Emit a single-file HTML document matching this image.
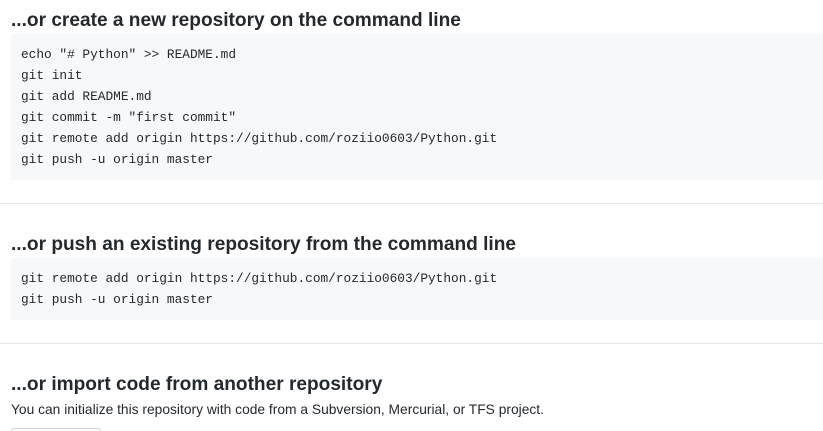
<!DOCTYPE html>
<html style="overflow:hidden;height:431px"><head><style>
body{margin:0;background:#fff;width:823px;height:431px;overflow:hidden;position:relative;font-family:"Liberation Sans",sans-serif;color:#24292e}
h3{position:absolute;left:11px;margin:0;font-size:19.1px;font-weight:600;line-height:24px;white-space:nowrap}
.box{position:absolute;left:11px;right:0;background:#f6f8fa}
pre{margin:0;padding:0;position:absolute;left:21px;font-family:"Liberation Mono",monospace;font-size:12.8px;line-height:21px;color:#24292e}
.hr{position:absolute;left:0;right:0;height:1px;background:#e1e4e8}
</style></head><body>
<h3 style="top:9px">...or create a new repository on the command line</h3>
<div class="box" style="top:34px;height:146px"></div>
<pre style="top:44px">echo "# Python" &gt;&gt; README.md
git init
git add README.md
git commit -m "first commit"
git remote add origin https://github.com/roziio0603/Python.git
git push -u origin master</pre>
<div class="hr" style="top:203px"></div>
<h3 style="top:233px">...or push an existing repository from the command line</h3>
<div class="box" style="top:258px;height:62px"></div>
<pre style="top:268px">git remote add origin https://github.com/roziio0603/Python.git
git push -u origin master</pre>
<div class="hr" style="top:343px"></div>
<h3 style="top:373px">...or import code from another repository</h3>
<div style="position:absolute;left:11px;top:401px;font-size:13.8px;line-height:18px">You can initialize this repository with code from a Subversion, Mercurial, or TFS project.</div>
<div style="position:absolute;left:11px;top:428px;width:88px;height:2px;border:1px solid #d1d5da;border-bottom:none;border-radius:3px 3px 0 0;background:#fafbfc"></div>
</body></html>
